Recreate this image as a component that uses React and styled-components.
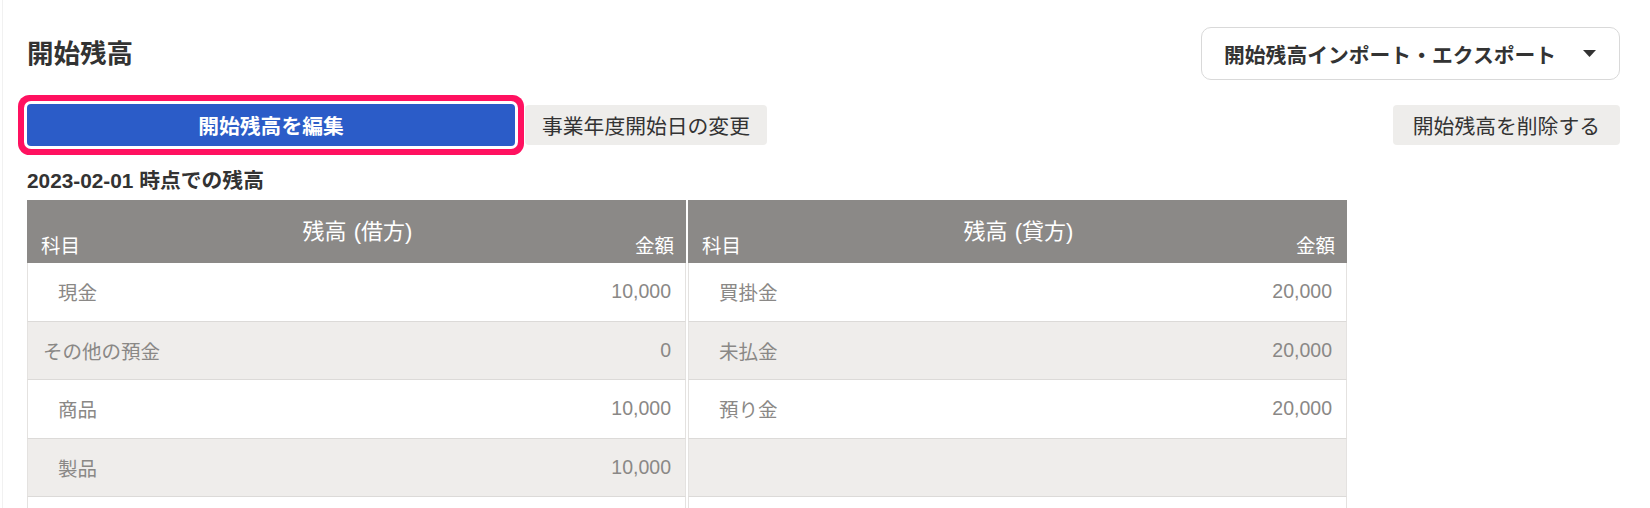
import React from "react";
import styled, { createGlobalStyle } from "styled-components";

const Global = createGlobalStyle`
  html, body { margin: 0; padding: 0; background: #fff; }
  body {
    font-family: "Liberation Sans", "Noto Sans CJK JP", sans-serif;
    color: #333;
  }
`;

const Page = styled.div`
  margin-left: 2px;
  border-left: 1px solid #f1f1f1;
  min-height: 508px;
  box-sizing: border-box;
  padding: 27px 30px 0 24px;
`;

const HeaderRow = styled.div`
  display: flex;
  align-items: center;
  justify-content: space-between;
  height: 53px;
`;

const Title = styled.h1`
  margin: 0;
  font-size: 26.5px;
  font-weight: 700;
  line-height: 32px;
  color: #333;
`;

const ImportButton = styled.button`
  display: flex;
  align-items: center;
  gap: 27px;
  height: 53px;
  width: 419px;
  box-sizing: border-box;
  padding: 0 18px 0 22px;
  background: #fff;
  border: 1px solid #d9d9d9;
  border-radius: 10px;
  font-family: inherit;
  font-size: 20.8px;
  font-weight: 700;
  color: #333;
  white-space: nowrap;
  cursor: pointer;
`;

const Caret = styled.svg`
  flex: none;
  width: 13px;
  height: 7px;
`;

const Toolbar = styled.div`
  display: flex;
  align-items: center;
  gap: 10px;
  margin-top: 24px;
`;

const PrimaryButton = styled.button`
  width: 488px;
  height: 42px;
  background: #2b5cc8;
  color: #fff;
  border: none;
  border-radius: 4px;
  font-family: inherit;
  font-size: 20.8px;
  font-weight: 700;
  cursor: pointer;
  box-shadow: 0 0 0 3px #fff, 0 0 0 9px #ff1160;
`;

const GrayButton = styled.button`
  height: 40px;
  padding: 0 ${(p) => p.$pad || 17}px;
  background: #eeedeb;
  color: #333;
  border: none;
  border-radius: 4px;
  font-family: inherit;
  font-size: 20.8px;
  font-weight: 400;
  white-space: nowrap;
  cursor: pointer;
  margin-left: ${(p) => (p.$right ? "auto" : "0")};
`;

const DateLabel = styled.div`
  margin-top: 22px;
  font-size: 20.8px;
  line-height: 25px;
  font-weight: 700;
  color: #333;
`;

const Tables = styled.div`
  margin-top: 7px;
  width: 1320px;
  display: grid;
  grid-template-columns: 1fr 1fr;
  column-gap: 2px;
`;

const Table = styled.div`
  display: flex;
  flex-direction: column;
`;

const HeadCell = styled.div`
  display: grid;
  height: 63px;
  box-sizing: border-box;
  background: #8b8987;
  color: #fff;
  padding: 0 12px 0 14px;
`;

const HeadTitle = styled.div`
  grid-area: 1 / 1;
  justify-self: center;
  align-self: start;
  margin-top: 19px;
  font-size: 22px;
  word-spacing: 1px;
  line-height: 26px;
`;

const HeadLabels = styled.div`
  grid-area: 1 / 1;
  align-self: end;
  display: flex;
  justify-content: space-between;
  margin-bottom: 5px;
  font-size: 19.5px;
  line-height: 24px;
`;

const Row = styled.div`
  display: flex;
  align-items: center;
  justify-content: space-between;
  height: 58.5px;
  box-sizing: border-box;
  padding: 0 14px 0 ${(p) => (p.$indent ? 30 : 15)}px;
  background: ${(p) => (p.$alt ? "#efedeb" : "#fff")};
  border-bottom: 1px solid #dcdad8;
  border-left: 1px solid #e4e2e0;
  border-right: 1px solid #e4e2e0;
  color: #8a8886;
  font-size: 19.5px;
`;

const debit = [
  { name: "現金", amount: "10,000", indent: true },
  { name: "その他の預金", amount: "0", indent: false },
  { name: "商品", amount: "10,000", indent: true },
  { name: "製品", amount: "10,000", indent: true },
  { name: "", amount: "", indent: true },
];

const credit = [
  { name: "買掛金", amount: "20,000", indent: true },
  { name: "未払金", amount: "20,000", indent: true },
  { name: "預り金", amount: "20,000", indent: true },
  { name: "", amount: "", indent: true },
  { name: "", amount: "", indent: true },
];

function BalanceTable({ title, rows }) {
  return (
    <Table>
      <HeadCell>
        <HeadTitle>{title}</HeadTitle>
        <HeadLabels>
          <span>科目</span>
          <span>金額</span>
        </HeadLabels>
      </HeadCell>
      {rows.map((r, i) => (
        <Row key={i} $alt={i % 2 === 1} $indent={r.indent}>
          <span>{r.name}</span>
          <span>{r.amount}</span>
        </Row>
      ))}
    </Table>
  );
}

export default function App() {
  return (
    <>
      <Global />
      <Page>
        <HeaderRow>
          <Title>開始残高</Title>
          <ImportButton>
            <span>開始残高インポート・エクスポート</span>
            <Caret viewBox="0 0 13 7">
              <path d="M0 0 H13 L6.5 7 Z" fill="#333" />
            </Caret>
          </ImportButton>
        </HeaderRow>
        <Toolbar>
          <PrimaryButton>開始残高を編集</PrimaryButton>
          <GrayButton $pad={17}>事業年度開始日の変更</GrayButton>
          <GrayButton $pad={20} $right>
            開始残高を削除する
          </GrayButton>
        </Toolbar>
        <DateLabel>2023-02-01 時点での残高</DateLabel>
        <Tables>
          <BalanceTable title="残高 (借方)" rows={debit} />
          <BalanceTable title="残高 (貸方)" rows={credit} />
        </Tables>
      </Page>
    </>
  );
}
